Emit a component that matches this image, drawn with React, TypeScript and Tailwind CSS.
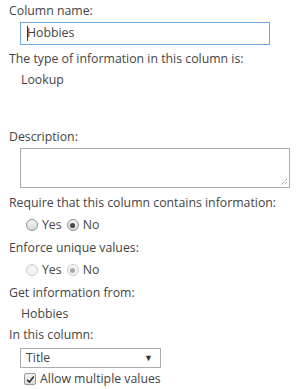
function Radio({ checked, disabled }: { checked?: boolean; disabled?: boolean }) {
  return (
    <span
      className={`inline-flex h-[12px] w-[12px] items-center justify-center rounded-full border ${
        disabled ? "border-[#cdcdcd] bg-[#f4f4f4]" : "border-[#8f8f8f] bg-gradient-to-b from-[#f4f4f4] to-[#d9d9d9]"
      }`}
    >
      {checked && (
        <span className={`h-[5px] w-[5px] rounded-full ${disabled ? "bg-[#a8a8a8]" : "bg-[#444]"}`} />
      )}
    </span>
  );
}

function RadioRow({ yes, no, disabled }: { yes?: boolean; no?: boolean; disabled?: boolean }) {
  return (
    <div className="flex h-[22px] items-center pl-[17px]">
      <Radio checked={yes} disabled={disabled} />
      <span className="ml-[4px]">Yes</span>
      <span className="ml-[5px] flex">
        <Radio checked={no} disabled={disabled} />
      </span>
      <span className="ml-[4px]">No</span>
    </div>
  );
}

export default function App() {
  return (
    <div
      className="h-[389px] w-[302px] bg-white pl-[9px] text-[12.3px] text-[#444]"
      style={{ fontFamily: '"Open Sans", "Noto Sans", sans-serif' }}
    >
      <div className="h-[22px] leading-[22px]">Column name:</div>
      <div className="ml-[11px] flex h-[23px] w-[250px] items-center border border-[#6ea6e8] pl-[6px]">
        <span className="mr-[-1px] h-[15px] w-px bg-[#333]" />
        <span>Hobbies</span>
      </div>
      <div className="mt-[3px] h-[21px] leading-[21px]">The type of information in this column is:</div>
      <div className="h-[21px] pl-[12px] leading-[21px]">Lookup</div>
      <div className="mt-[36px] h-[22px] leading-[22px]">Description:</div>
      <div className="relative ml-[11px] h-[40px] w-[270px] border border-[#ababab]">
        <svg className="absolute bottom-[1px] right-[1px]" width="9" height="9" viewBox="0 0 9 9">
          <path d="M8 2 L2 8 M8 5 L5 8" stroke="#777" strokeWidth="1" strokeDasharray="1 1" />
        </svg>
      </div>
      <div className="mt-[4px] h-[22px] leading-[22px]">Require that this column contains information:</div>
      <RadioRow no />
      <div className="mt-[1px] h-[22px] leading-[22px]">Enforce unique values:</div>
      <RadioRow no disabled />
      <div className="mt-[1px] h-[21px] leading-[21px]">Get information from:</div>
      <div className="h-[21px] pl-[12px] leading-[21px]">Hobbies</div>
      <div className="h-[22px] leading-[22px]">In this column:</div>
      <div className="ml-[11px] mt-[2px] flex h-[20px] w-[141px] items-center justify-between border border-[#ababab] pl-[5px] pr-[7px]">
        <span>Title</span>
        <span className="text-[9px] text-[#333]">▼</span>
      </div>
      <div className="flex h-[22px] items-center pl-[15px]">
        <span className="flex h-[12px] w-[12px] items-center justify-center rounded-[2px] border border-[#9a9a9a] bg-gradient-to-b from-[#f2f2f2] to-[#dcdcdc]">
          <svg width="9" height="9" viewBox="0 0 9 9">
            <path d="M1.2 4.8 L3.5 7 L7.8 1.5" stroke="#333" strokeWidth="1.6" fill="none" />
          </svg>
        </span>
        <span className="ml-[4px]">Allow multiple values</span>
      </div>
    </div>
  );
}
